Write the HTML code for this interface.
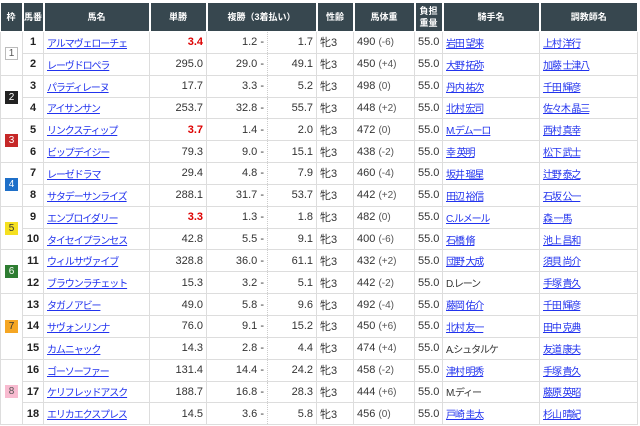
<!DOCTYPE html>
<html><head><meta charset="utf-8"><style>
body{margin:0;background:#fff;font-family:"Liberation Sans","Noto Sans CJK JP",sans-serif;}
table{position:absolute;left:0;top:2px;border-collapse:collapse;table-layout:fixed;width:637px;font-size:11px;color:#333}
th{background:#37474f;color:#fff;font-size:9px;font-weight:bold;height:28px;border:1px solid #fff;border-left:2px solid #fff;padding:0;line-height:12px}
td{border:1px solid #ddd;height:20.85px;padding:0 3px;white-space:nowrap;overflow:hidden;vertical-align:middle}
.n{font-weight:bold;text-align:center;color:#222;font-size:11px}
a{color:#2233ee;text-decoration:underline}
a,.j{font-size:10px;letter-spacing:-1.1px;vertical-align:middle}
.r{text-align:right}
.red{color:#d00;font-weight:bold}
.pl{border-right:1px dotted #ccc;text-align:right}
.pr{border-left:1px dotted #ccc;text-align:right}
.w small{font-size:10px;color:#555}
.f{text-align:center;padding:0}
.b{display:inline-block;width:13px;height:13px;line-height:13px;font-size:10px;text-align:center}
</style></head><body>
<table>
<colgroup><col style="width:22px"><col style="width:21px"><col style="width:106px"><col style="width:57px"><col style="width:61px"><col style="width:49px"><col style="width:37px"><col style="width:61px"><col style="width:28px"><col style="width:97px"><col style="width:98px"></colgroup>
<tr><th style="border-left:none">枠</th><th>馬番</th><th>馬名</th><th>単勝</th><th colspan="2">複勝（3着払い）</th><th>性齢</th><th>馬体重</th><th>負担<br>重量</th><th>騎手名</th><th>調教師名</th></tr>
<tr><td class="f" rowspan="2"><span class="b" style="border:1px solid #bbb;color:#555;width:11px;height:11px;line-height:11px">1</span></td><td class="n">1</td><td><a>アルマヴェローチェ</a></td><td class="r red">3.4</td><td class="pl">1.2 -</td><td class="pr">1.7</td><td>牝3</td><td class="w">490 <small>(-6)</small></td><td>55.0</td><td><a>岩田 望来</a></td><td><a>上村 洋行</a></td></tr>
<tr><td class="n">2</td><td><a>レーヴドロペラ</a></td><td class="r">295.0</td><td class="pl">29.0 -</td><td class="pr">49.1</td><td>牝3</td><td class="w">450 <small>(+4)</small></td><td>55.0</td><td><a>大野 拓弥</a></td><td><a>加藤 士津八</a></td></tr>
<tr><td class="f" rowspan="2"><span class="b" style="background:#222;color:#fff">2</span></td><td class="n">3</td><td><a>パラディレーヌ</a></td><td class="r">17.7</td><td class="pl">3.3 -</td><td class="pr">5.2</td><td>牝3</td><td class="w">498 <small>(0)</small></td><td>55.0</td><td><a>丹内 祐次</a></td><td><a>千田 輝彦</a></td></tr>
<tr><td class="n">4</td><td><a>アイサンサン</a></td><td class="r">253.7</td><td class="pl">32.8 -</td><td class="pr">55.7</td><td>牝3</td><td class="w">448 <small>(+2)</small></td><td>55.0</td><td><a>北村 宏司</a></td><td><a>佐々木 晶三</a></td></tr>
<tr><td class="f" rowspan="2"><span class="b" style="background:#c62828;color:#fff">3</span></td><td class="n">5</td><td><a>リンクスティップ</a></td><td class="r red">3.7</td><td class="pl">1.4 -</td><td class="pr">2.0</td><td>牝3</td><td class="w">472 <small>(0)</small></td><td>55.0</td><td><a>M.デムーロ</a></td><td><a>西村 真幸</a></td></tr>
<tr><td class="n">6</td><td><a>ビップデイジー</a></td><td class="r">79.3</td><td class="pl">9.0 -</td><td class="pr">15.1</td><td>牝3</td><td class="w">438 <small>(-2)</small></td><td>55.0</td><td><a>幸 英明</a></td><td><a>松下 武士</a></td></tr>
<tr><td class="f" rowspan="2"><span class="b" style="background:#1e6fc8;color:#fff">4</span></td><td class="n">7</td><td><a>レーゼドラマ</a></td><td class="r">29.4</td><td class="pl">4.8 -</td><td class="pr">7.9</td><td>牝3</td><td class="w">460 <small>(-4)</small></td><td>55.0</td><td><a>坂井 瑠星</a></td><td><a>辻野 泰之</a></td></tr>
<tr><td class="n">8</td><td><a>サタデーサンライズ</a></td><td class="r">288.1</td><td class="pl">31.7 -</td><td class="pr">53.7</td><td>牝3</td><td class="w">442 <small>(+2)</small></td><td>55.0</td><td><a>田辺 裕信</a></td><td><a>石坂 公一</a></td></tr>
<tr><td class="f" rowspan="2"><span class="b" style="background:#f5e020;color:#333">5</span></td><td class="n">9</td><td><a>エンブロイダリー</a></td><td class="r red">3.3</td><td class="pl">1.3 -</td><td class="pr">1.8</td><td>牝3</td><td class="w">482 <small>(0)</small></td><td>55.0</td><td><a>C.ルメール</a></td><td><a>森 一馬</a></td></tr>
<tr><td class="n">10</td><td><a>タイセイプランセス</a></td><td class="r">42.8</td><td class="pl">5.5 -</td><td class="pr">9.1</td><td>牝3</td><td class="w">400 <small>(-6)</small></td><td>55.0</td><td><a>石橋 脩</a></td><td><a>池上 昌和</a></td></tr>
<tr><td class="f" rowspan="2"><span class="b" style="background:#2e7d32;color:#fff">6</span></td><td class="n">11</td><td><a>ウィルサヴァイブ</a></td><td class="r">328.8</td><td class="pl">36.0 -</td><td class="pr">61.1</td><td>牝3</td><td class="w">432 <small>(+2)</small></td><td>55.0</td><td><a>団野 大成</a></td><td><a>須貝 尚介</a></td></tr>
<tr><td class="n">12</td><td><a>ブラウンラチェット</a></td><td class="r">15.3</td><td class="pl">3.2 -</td><td class="pr">5.1</td><td>牝3</td><td class="w">442 <small>(-2)</small></td><td>55.0</td><td><span class="j">D.レーン</span></td><td><a>手塚 貴久</a></td></tr>
<tr><td class="f" rowspan="3"><span class="b" style="background:#f5a623;color:#333">7</span></td><td class="n">13</td><td><a>タガノアビー</a></td><td class="r">49.0</td><td class="pl">5.8 -</td><td class="pr">9.6</td><td>牝3</td><td class="w">492 <small>(-4)</small></td><td>55.0</td><td><a>藤岡 佑介</a></td><td><a>千田 輝彦</a></td></tr>
<tr><td class="n">14</td><td><a>サヴォンリンナ</a></td><td class="r">76.0</td><td class="pl">9.1 -</td><td class="pr">15.2</td><td>牝3</td><td class="w">450 <small>(+6)</small></td><td>55.0</td><td><a>北村 友一</a></td><td><a>田中 克典</a></td></tr>
<tr><td class="n">15</td><td><a>カムニャック</a></td><td class="r">14.3</td><td class="pl">2.8 -</td><td class="pr">4.4</td><td>牝3</td><td class="w">474 <small>(+4)</small></td><td>55.0</td><td><span class="j">A.シュタルケ</span></td><td><a>友道 康夫</a></td></tr>
<tr><td class="f" rowspan="3"><span class="b" style="background:#f8bbd0;color:#555">8</span></td><td class="n">16</td><td><a>ゴーソーファー</a></td><td class="r">131.4</td><td class="pl">14.4 -</td><td class="pr">24.2</td><td>牝3</td><td class="w">458 <small>(-2)</small></td><td>55.0</td><td><a>津村 明秀</a></td><td><a>手塚 貴久</a></td></tr>
<tr><td class="n">17</td><td><a>ケリフレッドアスク</a></td><td class="r">188.7</td><td class="pl">16.8 -</td><td class="pr">28.3</td><td>牝3</td><td class="w">444 <small>(+6)</small></td><td>55.0</td><td><span class="j">M.ディー</span></td><td><a>藤原 英昭</a></td></tr>
<tr><td class="n">18</td><td><a>エリカエクスプレス</a></td><td class="r">14.5</td><td class="pl">3.6 -</td><td class="pr">5.8</td><td>牝3</td><td class="w">456 <small>(0)</small></td><td>55.0</td><td><a>戸崎 圭太</a></td><td><a>杉山 晴紀</a></td></tr>
</table>
</body></html>
